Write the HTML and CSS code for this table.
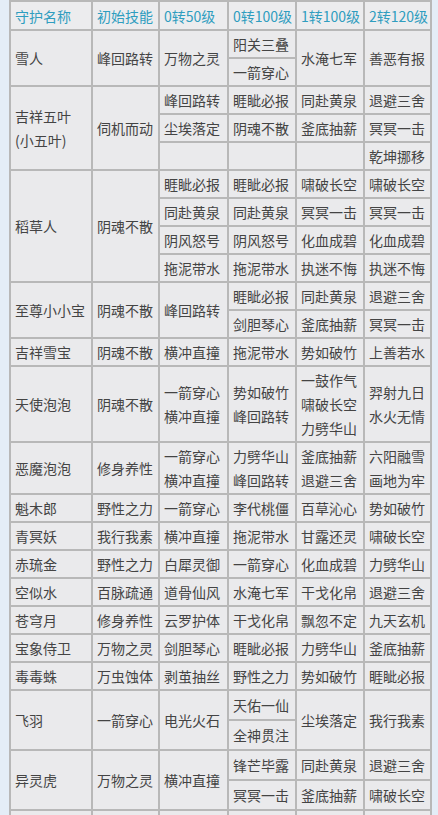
FILE: index.html
```html
<!DOCTYPE html>
<html lang="zh">
<head>
<meta charset="utf-8">
<title>守护技能表</title>
<link rel="stylesheet" href="styles.css">
</head>
<body>
<table class="guard">
<colgroup>
<col class="c1"><col class="c2"><col class="c3"><col class="c4"><col class="c5"><col class="c6">
</colgroup>
<thead>
<tr class="head"><th>守护名称</th><th>初始技能</th><th>0转50级</th><th>0转100级</th><th>1转100级</th><th>2转120级</th></tr>
</thead>
<tbody>
<tr><td rowspan="2">雪人</td><td rowspan="2">峰回路转</td><td rowspan="2">万物之灵</td><td>阳关三叠</td><td rowspan="2">水淹七军</td><td rowspan="2">善恶有报</td></tr>
<tr><td>一箭穿心</td></tr>

<tr><td rowspan="3">吉祥五叶<br>(小五叶)</td><td rowspan="3">伺机而动</td><td>峰回路转</td><td>睚眦必报</td><td>同赴黄泉</td><td>退避三舍</td></tr>
<tr><td>尘埃落定</td><td>阴魂不散</td><td>釜底抽薪</td><td>冥冥一击</td></tr>
<tr><td></td><td></td><td></td><td>乾坤挪移</td></tr>

<tr><td rowspan="4">稻草人</td><td rowspan="4">阴魂不散</td><td>睚眦必报</td><td>睚眦必报</td><td>啸破长空</td><td>啸破长空</td></tr>
<tr><td>同赴黄泉</td><td>同赴黄泉</td><td>冥冥一击</td><td>冥冥一击</td></tr>
<tr><td>阴风怒号</td><td>阴风怒号</td><td>化血成碧</td><td>化血成碧</td></tr>
<tr><td>拖泥带水</td><td>拖泥带水</td><td>执迷不悔</td><td>执迷不悔</td></tr>

<tr><td rowspan="2">至尊小小宝</td><td rowspan="2">阴魂不散</td><td rowspan="2">峰回路转</td><td>睚眦必报</td><td>同赴黄泉</td><td>退避三舍</td></tr>
<tr><td>剑胆琴心</td><td>釜底抽薪</td><td>冥冥一击</td></tr>

<tr><td>吉祥雪宝</td><td>阴魂不散</td><td>横冲直撞</td><td>拖泥带水</td><td>势如破竹</td><td>上善若水</td></tr>

<tr><td>天使泡泡</td><td>阴魂不散</td><td>一箭穿心<br>横冲直撞</td><td>势如破竹<br>峰回路转</td><td>一鼓作气<br>啸破长空<br>力劈华山</td><td>羿射九日<br>水火无情</td></tr>

<tr><td>恶魔泡泡</td><td>修身养性</td><td>一箭穿心<br>横冲直撞</td><td>力劈华山<br>峰回路转</td><td>釜底抽薪<br>退避三舍</td><td>六阳融雪<br>画地为牢</td></tr>

<tr><td>魁木郎</td><td>野性之力</td><td>一箭穿心</td><td>李代桃僵</td><td>百草沁心</td><td>势如破竹</td></tr>
<tr><td>青冥妖</td><td>我行我素</td><td>横冲直撞</td><td>拖泥带水</td><td>甘露还灵</td><td>啸破长空</td></tr>
<tr><td>赤琉金</td><td>野性之力</td><td>白犀灵御</td><td>一箭穿心</td><td>化血成碧</td><td>力劈华山</td></tr>
<tr><td>空似水</td><td>百脉疏通</td><td>道骨仙风</td><td>水淹七军</td><td>干戈化帛</td><td>退避三舍</td></tr>
<tr><td>苍穹月</td><td>修身养性</td><td>云罗护体</td><td>干戈化帛</td><td>飘忽不定</td><td>九天玄机</td></tr>
<tr><td>宝象侍卫</td><td>万物之灵</td><td>剑胆琴心</td><td>睚眦必报</td><td>力劈华山</td><td>釜底抽薪</td></tr>
<tr><td>毒毒蛛</td><td>万虫蚀体</td><td>剥茧抽丝</td><td>野性之力</td><td>势如破竹</td><td>睚眦必报</td></tr>

<tr class="tall"><td rowspan="2">飞羽</td><td rowspan="2">一箭穿心</td><td rowspan="2">电光火石</td><td>天佑一仙</td><td rowspan="2">尘埃落定</td><td rowspan="2">我行我素</td></tr>
<tr class="tall"><td>全神贯注</td></tr>

<tr class="tall"><td rowspan="2">异灵虎</td><td rowspan="2">万物之灵</td><td rowspan="2">横冲直撞</td><td>锋芒毕露</td><td>同赴黄泉</td><td>退避三舍</td></tr>
<tr class="tall"><td>冥冥一击</td><td>釜底抽薪</td><td>啸破长空</td></tr>

<tr class="tall"><td>&nbsp;</td><td></td><td></td><td></td><td></td><td></td></tr>
</tbody>
</table>
</body>
</html>
```

FILE: styles.css
```css
html, body {
  margin: 0;
  padding: 0;
  background: #e4edf7;
}

body {
  font-family: "Noto Sans CJK SC", "Noto Sans", sans-serif;
  font-size: 14px;
  color: #444;
}

.guard {
  margin: 0 0 0 9px;
  width: 421px;
  table-layout: fixed;
  border-collapse: collapse;
  background: #eaeaec;
  border: 2px solid #b8b8b8;
}

.c1 { width: 82px; }
.c2 { width: 67px; }
.c3 { width: 69px; }
.c4 { width: 68px; }
.c5 { width: 68px; }
.c6 { width: 67px; }

.guard th,
.guard td {
  border: 2px solid #b8b8b8;
  padding: 1px 4px;
  line-height: 24px;
  height: 24px;
  text-align: left;
  vertical-align: middle;
  white-space: nowrap;
  font-weight: normal;
}

.guard thead th {
  color: #2f9dbf;
  background: #ececee;
  height: 25px;
}

.guard .tall td {
  height: 26px;
}
```
